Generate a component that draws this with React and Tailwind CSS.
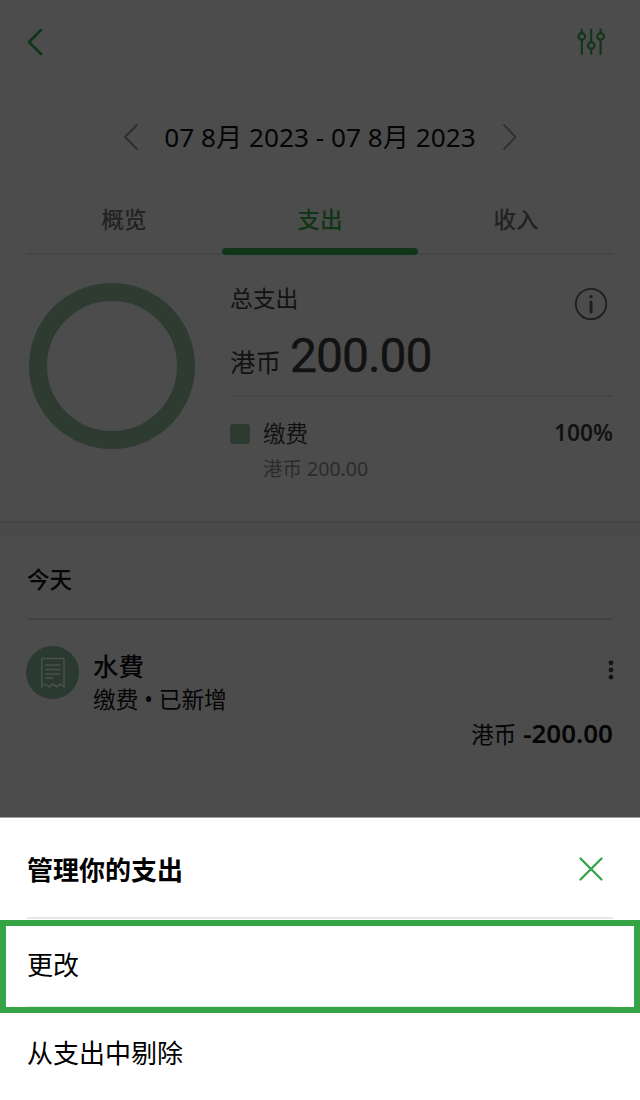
const tabs = [
    { label: "概览", active: false },
    { label: "支出", active: true },
    { label: "收入", active: false },
];

function Chevron({ className, flip }) {
    return (
        <svg width="16" height="28" viewBox="0 0 16 28" fill="none" stroke="currentColor" strokeLinecap="round" strokeLinejoin="round" className={className}>
            <path d={flip ? "M2 2 L13.5 14 L2 26" : "M14 2 L2 14 L14 26"} />
        </svg>
    );
}

function FilterIcon() {
    return (
        <svg width="28" height="28" viewBox="0 0 28 28" fill="none" stroke="currentColor" strokeWidth="2.1" strokeLinecap="round" className="text-[#103518]">
            <path d="M4.8 1.5V5.2M4.8 11.8V26M14.2 1.5V14.2M14.2 20.8V26M23.6 1.5V5.2M23.6 11.8V26" />
            <circle cx="4.8" cy="8.5" r="3.3" />
            <circle cx="14.2" cy="17.5" r="3.3" />
            <circle cx="23.6" cy="8.5" r="3.3" />
        </svg>
    );
}

function InfoIcon() {
    return (
        <svg width="34" height="34" viewBox="0 0 34 34" fill="none" className="text-[#1f1f1f]">
            <circle cx="17" cy="17" r="15.2" stroke="currentColor" strokeWidth="1.8" />
            <circle cx="17" cy="9.6" r="1.6" fill="currentColor" />
            <path d="M17 15V25" stroke="currentColor" strokeWidth="3" strokeLinecap="round" />
        </svg>
    );
}

function ReceiptIcon() {
    return (
        <svg width="26" height="32" viewBox="0 0 26 32" fill="none" stroke="currentColor" strokeWidth="1.6" strokeLinejoin="round" strokeLinecap="round" className="text-[#4a4f4b]">
            <path d="M1.8 1.5H24V30L20.5 27L16.6 30L12.9 27L9.1 30L5.4 27L1.8 30Z" />
            <path d="M6 8H20M6 12.5H20M6 17H20M6 21.2H12.5" />
        </svg>
    );
}

export default function App() {
    return (
        <div className="relative w-[640px] h-[1100px] overflow-hidden bg-[#4c4c4c] text-[#050505] font-['Noto_Sans','Noto_Sans_CJK_SC',sans-serif]">
            {/* Header */}
            <header className="flex h-[83px] items-center justify-between pl-[27px] pr-[35.5px]">
                <Chevron className="stroke-[2.8] text-[#103518]" />
                <FilterIcon />
            </header>

            {/* Date range */}
            <div className="flex h-[107px] items-center justify-center">
                <Chevron className="stroke-[1.8] text-[#2e2e2e]" />
                <span className="w-[363px] whitespace-nowrap text-center text-[26.2px] leading-[36px]">07 8月 2023 - 07 8月 2023</span>
                <Chevron flip className="stroke-[1.8] text-[#2e2e2e]" />
            </div>

            {/* Tabs */}
            <nav className="mx-[26px] grid h-[65px] grid-cols-3 text-center text-[22.5px] leading-[60px] font-medium">
                {tabs.map((tab) => (
                    <div key={tab.label} className={`flex flex-col justify-between ${tab.active ? "text-[#103518]" : "text-[#222222]"}`}>
                        <span className="h-[58px]">{tab.label}</span>
                        {tab.active
                            ? <div className="h-[7px] rounded-full bg-[#103518]" />
                            : <div className="h-[2px] bg-[#454545]" />}
                    </div>
                ))}
            </nav>

            {/* Summary */}
            <section className="flex h-[266px] pl-[29px] pr-[27px]">
                <div className="mt-[28px] size-[166px] shrink-0 rounded-full border-[18px] border-[#2d3b31]" />
                <div className="ml-[35px] flex-1 text-[#121212]">
                    <div className="flex h-[142px] justify-between border-b-2 border-[#464646]">
                        <div>
                            <div className="mt-[26px] text-[22.8px] leading-[36px]">总支出</div>
                            <div className="mt-[11px] flex items-baseline whitespace-nowrap leading-[56px]">
                                <span className="text-[25.5px]">港币</span>
                                <span className="ml-[9px] font-['Roboto'] text-[48px] tracking-[-1px] [-webkit-text-stroke:0.4px_#121212]">200.00</span>
                            </div>
                        </div>
                        <div className="mr-[5px] mt-[32px]"><InfoIcon /></div>
                    </div>
                    <div className="mt-[18px] flex h-[37px] items-center text-[22.5px]">
                        <span className="size-[20px] rounded-[3px] bg-[#2d3b31]" />
                        <span className="ml-[13px] flex-1">缴费</span>
                        <span className="text-[22.8px] font-semibold">100%</span>
                    </div>
                    <div className="ml-[33px] mt-[2px] text-[19.5px] leading-[30px] text-[#2b2b2b]">港币 200.00</div>
                </div>
            </section>
            <div className="h-[15px] border-t-2 border-[#444444] bg-[#494949]" />

            {/* Transactions */}
            <section className="px-[27px]">
                <h2 className="h-[84px] border-b-2 border-[#434343] text-[22.5px] leading-[87px] font-medium">今天</h2>
                <div className="mt-[26px] flex">
                    <div className="-ml-px flex size-[53px] shrink-0 items-center justify-center rounded-full bg-[#2a3a30]">
                        <ReceiptIcon />
                    </div>
                    <div className="ml-[14px] flex-1 pt-px">
                        <div className="text-[25.5px] leading-[38px] font-medium font-['Noto_Sans','Noto_Sans_CJK_TC',sans-serif]">水費</div>
                        <div className="text-[22.7px] leading-[30px]">缴费 • 已新增</div>
                    </div>
                    <svg width="6" height="20" viewBox="0 0 6 20" className="-mr-px mt-[14px] text-[#141414]" fill="currentColor">
                        <circle cx="3" cy="2.8" r="2.4" />
                        <circle cx="3" cy="10" r="2.4" />
                        <circle cx="3" cy="17.1" r="2.4" />
                    </svg>
                </div>
                <div className="flex items-baseline justify-end leading-[36px]">
                    <span className="text-[22.5px]">港币</span>
                    <span className="ml-[7px] text-[26px] font-semibold">-200.00</span>
                </div>
            </section>

            {/* Bottom sheet */}
            <div className="absolute inset-x-0 bottom-0 h-[283px] border-t border-[#a0a0a0] bg-white text-[26px] text-black">
                <div className="mx-[27px] flex h-[101px] items-center justify-between border-b-2 border-[#e6e7e9]">
                    <h3 className="pt-[5px] font-semibold">管理你的支出</h3>
                    <svg width="26" height="26" viewBox="0 0 26 26" fill="none" stroke="#35a446" strokeWidth="2.3" strokeLinecap="round" className="mr-[9.5px] mt-[2px]">
                        <path d="M2.5 2.5L23.5 23.5M23.5 2.5L2.5 23.5" />
                    </svg>
                </div>
                <div className="mt-px h-[93px] border-[6px] border-[#35a446] px-[21px]">
                    <div className="h-[81px] border-b border-[#e6e7e9] leading-[79px]">更改</div>
                </div>
                <div className="px-[27px] leading-[81px]">从支出中剔除</div>
            </div>
        </div>
    );
}
